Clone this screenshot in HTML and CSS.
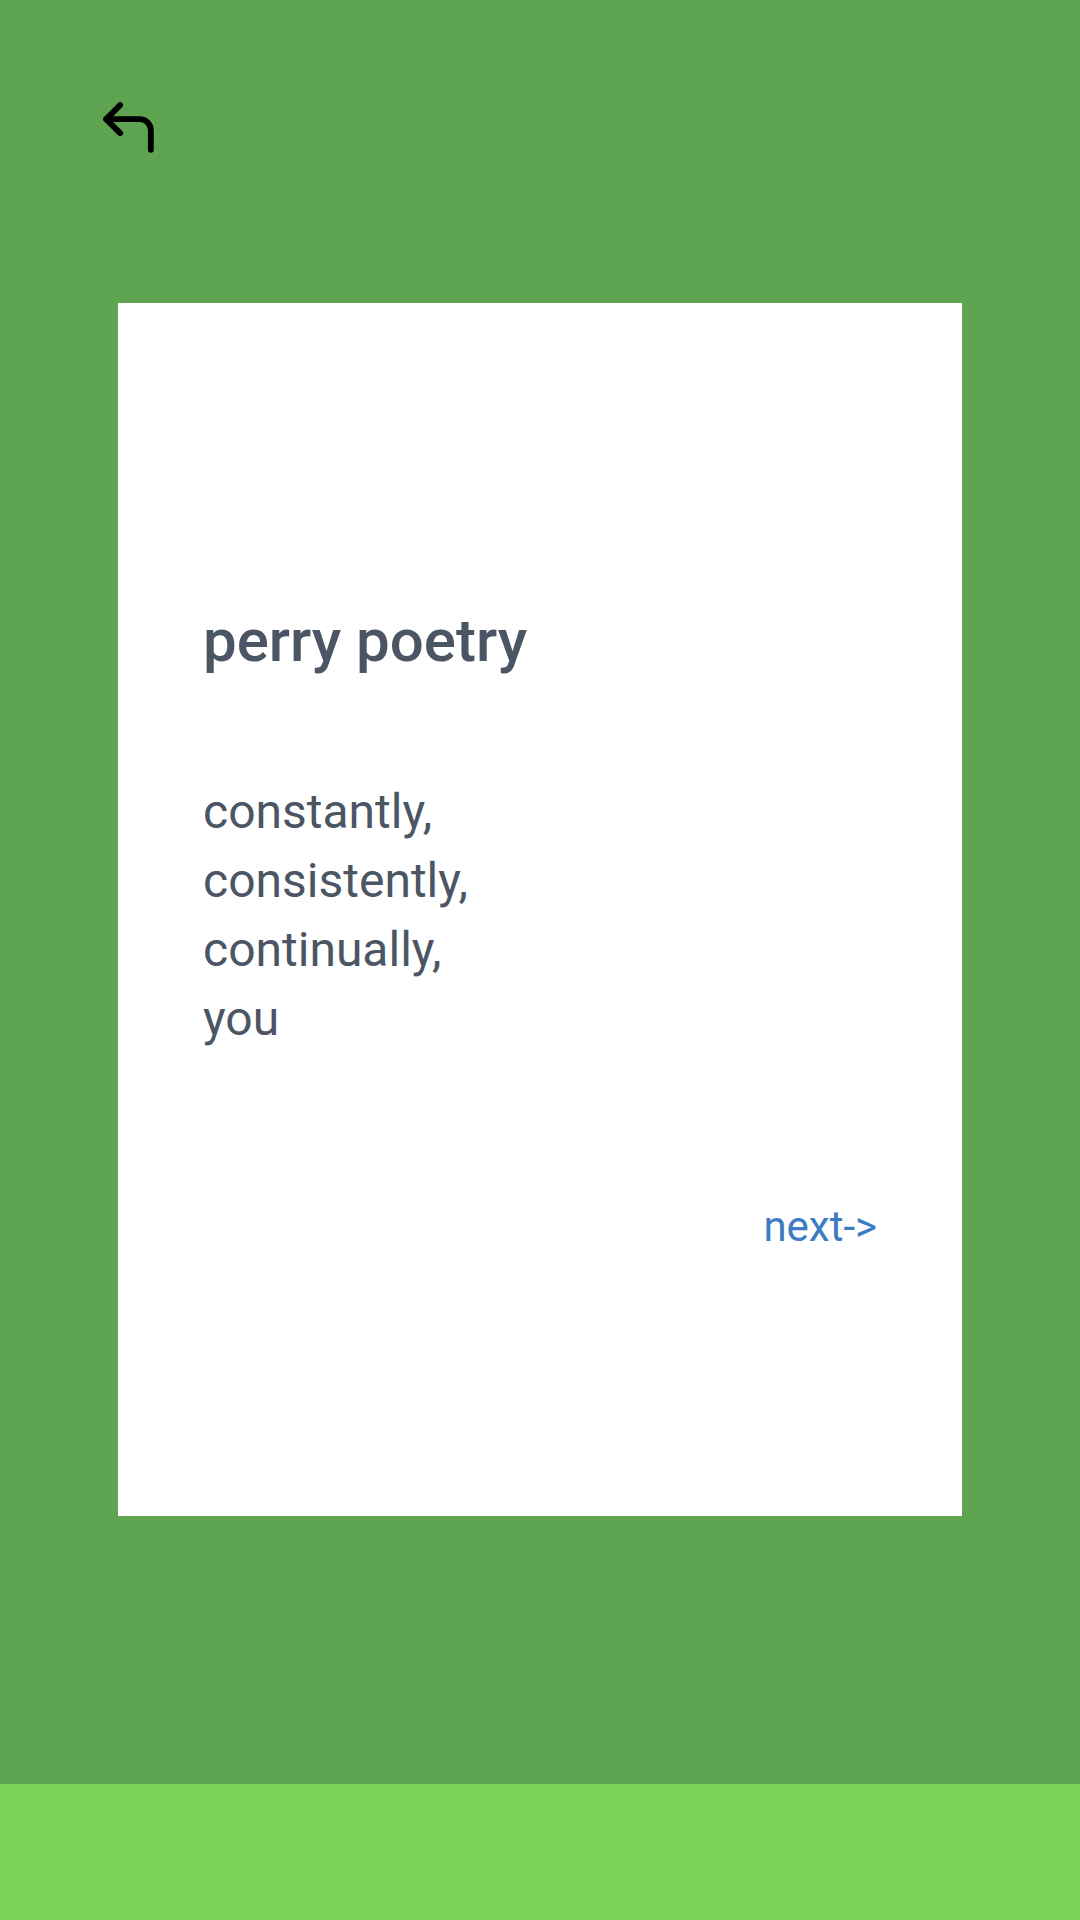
FILE: index.html
```html
<!DOCTYPE html>
<html lang="en">
<head>
<meta charset="utf-8">
<title>perry poetry</title>
<link rel="stylesheet" href="styles.css">
</head>
<body>
<div class="page">
  <main class="main">
    <header class="topbar">
      <a class="back" href="#" aria-label="back">
        <svg viewBox="0 0 24 24" width="67" height="67" fill="none" stroke="#000" stroke-width="2.1" stroke-linecap="round" stroke-linejoin="round">
          <polyline points="9 14 4 9 9 4"></polyline>
          <path d="M20 20v-7a4 4 0 0 0-4-4H4"></path>
        </svg>
      </a>
    </header>
    <section class="card">
      <h1 class="title">perry poetry</h1>
      <p class="poem">constantly,<br>consistently,<br>continually,<br>you</p>
      <div class="actions"><a class="next" href="#">next-&gt;</a></div>
    </section>
  </main>
  <footer class="footer"></footer>
</div>
</body>
</html>
```
FILE: styles.css
```css
* { box-sizing: border-box; }
html, body { margin: 0; padding: 0; }
body {
  font-family: Roboto, "Liberation Sans", Arial, sans-serif;
  background: #5fa451;
}
.page {
  width: 1080px;
  height: 1920px;
  display: flex;
  flex-direction: column;
}
.main {
  height: 1784px;
  background: #5fa451;
  display: flex;
  flex-direction: column;
}
.topbar {
  height: 303px;
  padding: 94px 0 0 95px;
}
.back { display: inline-block; width: 67px; height: 67px; }
.back svg { display: block; }
.card {
  width: 844px;
  height: 1213px;
  margin: 0 auto;
  background: #ffffff;
  padding: 302px 85px 0 85px;
}
.title {
  margin: 0;
  font-size: 60px;
  line-height: 72px;
  font-weight: 500;
  color: #4b5563;
}
.poem {
  margin: 100px 0 0 0;
  font-size: 48px;
  line-height: 69px;
  font-weight: 400;
  color: #4b5563;
}
.actions {
  margin-top: 149px;
  display: flex;
  justify-content: flex-end;
}
.next {
  font-size: 42px;
  line-height: 50px;
  color: #3d7cc2;
  text-decoration: none;
}
.footer {
  height: 136px;
  background: #79d455;
}
```
